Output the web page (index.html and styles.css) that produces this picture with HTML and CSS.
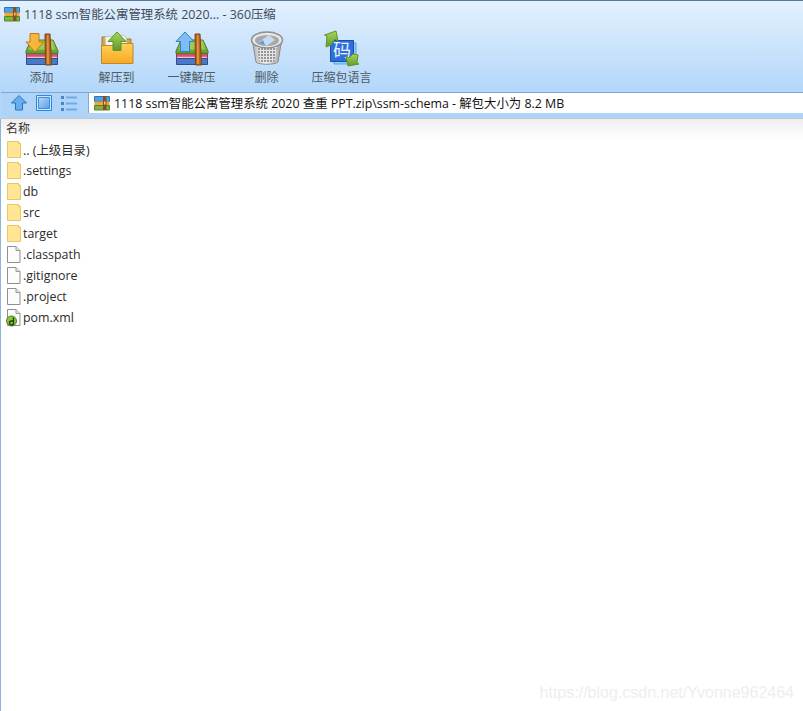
FILE: index.html
```html
<!DOCTYPE html>
<html>
<head>
    <title>360压缩</title>
    <link rel="stylesheet" href="styles.css">
</head>
<body>
    <svg class="defs" width="0" height="0">
        <defs>
            <linearGradient id="gold" x1="0" y1="0" x2="0" y2="1"><stop offset="0" stop-color="#fdd35a"/><stop offset="1" stop-color="#f9a821"/></linearGradient>
            <linearGradient id="green" x1="0" y1="0" x2="0" y2="1"><stop offset="0" stop-color="#a8d65a"/><stop offset="1" stop-color="#5c9a2c"/></linearGradient>
            <linearGradient id="can" x1="0" y1="0" x2="1" y2="0"><stop offset="0" stop-color="#b5b5b5"/><stop offset=".45" stop-color="#f6f6f6"/><stop offset="1" stop-color="#a5a5a5"/></linearGradient>
            <linearGradient id="pane" x1="0" y1="0" x2="1" y2="1"><stop offset="0" stop-color="#b4d8fb"/><stop offset="1" stop-color="#5c9fe8"/></linearGradient>
            <pattern id="holes" width="3" height="3" patternUnits="userSpaceOnUse"><rect width="3" height="3" fill="#e6e6e6"/><rect width="2" height="2" fill="#979797"/></pattern>
            <symbol id="books" viewBox="0 0 36 36">
                <path d="M2.500 23h31v5.500h-31z" fill="#d8506f" stroke="#8c3a50"/>
                <path d="M3 27.500h30" stroke="#f3c3cf" stroke-width="1.500"/>
                <path d="M2.500 28.500h31v6h-31z" fill="#4a78c8" stroke="#2f4f86"/>
                <path d="M7 10h22l5 11v2.500H2v-2.500z" fill="url(#green)" stroke="#4d7a2a"/>
                <path d="M8 11.500h20l3 8H5z" fill="#9ccb58"/>
                <path d="M21 4h5l1.500 31h-6z" fill="#b8651f" stroke="#7c4315"/>
                <path d="M23 5h1.500l.5 29h-2z" fill="#de9340"/>
            </symbol>
            <symbol id="archive-small" viewBox="0 0 16 16">
                <path d="M.5 1.500h15v5H.5z" fill="#4aa3e6" stroke="#2f78b4"/>
                <path d="M.5 6.500h15v4H.5z" fill="#f2a53a"/>
                <path d="M.5 10.500h15v4.500H.5z" fill="#7cb342" stroke="#55852a"/>
                <path d="M9 1h3.500v14H9z" fill="#8a4f1d"/>
                <path d="M10 6.500h1.500v3H10z" fill="#f2d36b"/>
            </symbol>
            <symbol id="folder" viewBox="0 0 14 17">
                <path d="M.5.500h11l2 2v14H.5z" fill="#ffe594" stroke="#e9c765"/>
                <path d="M11.500.500v2h2" fill="#fff3c4" stroke="#e9c765"/>
            </symbol>
            <symbol id="file" viewBox="0 0 14 17">
                <path d="M.5.500h8.500l4 4v12H.5z" fill="#fcfcfc" stroke="#8f8f8f"/>
                <path d="M9 .500v4h4" fill="#e4e4e4" stroke="#9a9a9a"/>
            </symbol>
        </defs>
    </svg>

    <div class="window">
        <div class="top">
            <div class="titlebar">
                <svg class="small-icon" width="16" height="16"><use href="#archive-small"/></svg>
                <span class="title">1118 ssm智能公寓管理系统 2020... - 360压缩</span>
            </div>
            <div class="toolbar">
                <div class="tool">
                    <svg class="tool-icon" width="36" height="36" viewBox="0 0 36 36">
                        <use href="#books" width="36" height="36"/>
                        <path d="M6 3.500h9v8.500h4.500l-8.500 10-9-10H6z" fill="#f6b73c" stroke="#c9761b"/>
                    </svg>
                    <span>添加</span>
                </div>
                <div class="tool">
                    <svg class="tool-icon" width="36" height="36" viewBox="0 0 36 36">
                        <path d="M3 7h12l2 2h15v22H3z" fill="#d9a63f" stroke="#a27a2a"/>
                        <path d="M6 7l18-2 3 2 2 14H7z" fill="#f5f5f5" stroke="#c4c4c4"/>
                        <path d="M2.500 15.500h14l2-2h15.500v20H2.500z" fill="url(#gold)" stroke="#b98a2c"/>
                        <path d="M18 2l9 9.500h-5v9h-8v-9H9z" fill="url(#green)" stroke="#5f9426"/>
                    </svg>
                    <span>解压到</span>
                </div>
                <div class="tool">
                    <svg class="tool-icon" width="36" height="36" viewBox="0 0 36 36">
                        <use href="#books" width="36" height="36"/>
                        <path d="M11 2l9 9.500h-4.500v10h-9v-10H2z" fill="#7fbdf5" stroke="#2f7fd0"/>
                    </svg>
                    <span>一键解压</span>
                </div>
                <div class="tool">
                    <svg class="tool-icon" width="36" height="36" viewBox="0 0 36 36">
                        <path d="M3.500 11l3.500 21c3 3 19 3 22 0l3.500-21z" fill="url(#can)" stroke="#8a8a8a"/>
                        <path d="M8 17l2.500 15h15L28 17z" fill="url(#holes)"/>
                        <ellipse cx="18" cy="10" rx="15.500" ry="8" fill="#e6e6e6" stroke="#8d8d8d" stroke-width="1.500"/>
                        <ellipse cx="18" cy="10.500" rx="12" ry="5.500" fill="#a8a8a8"/>
                        <path d="M10 12l10-7 6 5-8 5.500z" fill="#c3dcf3"/>
                        <path d="M10 13l4-3 2 5z" fill="#5a9edc"/>
                    </svg>
                    <span>删除</span>
                </div>
                <div class="tool">
                    <svg class="tool-icon" width="36" height="36" viewBox="0 0 36 36">
                        <path d="M10 13h22v21H10z" fill="#8fd0f5" stroke="#54a7de"/>
                        <path d="M6.500 10.500h23v21h-23z" fill="#2f6fdc" stroke="#1b4fa8"/>
                        <text class="code-char" x="18" y="27" text-anchor="middle">码</text>
                        <path d="M2 17l1-11-2.500-1L12 1l2 10-3-2-4 6z" fill="url(#green)" stroke="#5f9426"/>
                        <path d="M34 25l-1 8 2 1-11 2-2-10 3 2 4-4z" fill="url(#green)" stroke="#5f9426"/>
                    </svg>
                    <span>压缩包语言</span>
                </div>
            </div>
            <div class="navbar">
                <div class="nav-icons">
                    <svg width="16" height="16" viewBox="0 0 16 16"><path d="M8 .500l7.500 7.500H11.500v7h-7V8H.500z" fill="#66aef0" stroke="#2a72c4"/></svg>
                    <svg width="16" height="16" viewBox="0 0 16 16"><path d="M.500.500h15v15H.500z" fill="#cfe5fb" stroke="#2f86de"/><path d="M2.500 2.500h11v11h-11z" fill="url(#pane)" stroke="#3f8fe0"/></svg>
                    <svg width="16" height="16" viewBox="0 0 16 16"><path d="M0 1h3v3H0zM0 7h3v3H0zM0 13h3v3H0z" fill="#4a86c6"/><path d="M5 1.500h11v2H5zM5 7.500h11v2H5zM5 13.500h11v2H5z" fill="#6ea9e8"/></svg>
                </div>
                <div class="address">
                    <svg class="small-icon" width="16" height="16"><use href="#archive-small"/></svg>
                    <span>1118 ssm智能公寓管理系统 2020 查重 PPT.zip\ssm-schema - 解包大小为 8.2 MB</span>
                </div>
            </div>
        </div>

        <div class="list">
            <div class="list-head">名称</div>
            <div class="row"><svg width="14" height="17"><use href="#folder"/></svg><span>.. (上级目录)</span></div>
            <div class="row"><svg width="14" height="17"><use href="#folder"/></svg><span>.settings</span></div>
            <div class="row"><svg width="14" height="17"><use href="#folder"/></svg><span>db</span></div>
            <div class="row"><svg width="14" height="17"><use href="#folder"/></svg><span>src</span></div>
            <div class="row"><svg width="14" height="17"><use href="#folder"/></svg><span>target</span></div>
            <div class="row"><svg width="14" height="17"><use href="#file"/></svg><span>.classpath</span></div>
            <div class="row"><svg width="14" height="17"><use href="#file"/></svg><span>.gitignore</span></div>
            <div class="row"><svg width="14" height="17"><use href="#file"/></svg><span>.project</span></div>
            <div class="row">
                <svg width="14" height="17" viewBox="0 0 14 17">
                    <use href="#file" width="14" height="17"/>
                    <circle cx="4.500" cy="12" r="5" fill="#8cc63f" stroke="#4d7f1c"/>
                    <path d="M6.500 8.500v5.500a2 2 0 1 1-2-2h2" fill="none" stroke="#1f3d0c" stroke-width="1.300"/>
                </svg>
                <span>pom.xml</span>
            </div>
        </div>
    </div>

    <div class="watermark">https://blog.csdn.net/Yvonne962464</div>
</body>
</html>
```
FILE: styles.css
```css
* { margin: 0; padding: 0; box-sizing: border-box; }
html, body { height: 100%; }
body { font-family: "Open Sans", "Noto Sans CJK SC", sans-serif; font-size: 12.4px; color: #222; background: white; overflow: hidden; position: relative; }
svg { display: block; flex-shrink: 0; overflow: visible; }
.defs { position: absolute; }

.window { height: 100%; display: flex; flex-direction: column; border-left: 1px solid #8db4dc; }
.top { background: linear-gradient(#e3f0fe, #b3d7fa 90px); border-top: 1px solid #56789c; margin-left: -1px; padding-left: 1px; }

.titlebar { height: 26px; display: flex; align-items: center; gap: 4px; padding-left: 3px; }
.title { color: #3c4a58; }

.toolbar { height: 66px; display: flex; padding-left: 3px; border-bottom: 1px solid #7fa8d0; }
.tool { width: 75px; display: flex; flex-direction: column; align-items: center; font-size: 12px; color: #4d5963; }
.tool-icon { margin-top: 3px; }
.tool span { margin-top: 3px; line-height: 17px; white-space: nowrap; }
.code-char { font-family: "Noto Sans CJK SC", sans-serif; font-size: 18px; fill: #e8f2ff; }

.navbar { height: 26px; display: flex; background: #b0d4f8; border-bottom: 1px solid #c4c8cc; }
.nav-icons { width: 87px; display: flex; gap: 9px; padding: 2px 0 0 10px; }
.address { flex: 1; height: 20px; display: flex; align-items: center; gap: 4px; padding-left: 5px; background: white; color: #111; border-left: 1px solid #8ca9c6; white-space: nowrap; }

.list { flex: 1; background: white; }
.list-head { height: 20px; padding: 1px 0 0 5px; font-size: 12px; line-height: 17px; color: #333; background: linear-gradient(#eeeeee, #ffffff); }
.row { height: 21px; display: flex; align-items: center; gap: 2px; padding-left: 6px; color: #2b2b2b; }

.watermark { position: absolute; right: 9px; top: 684px; font-family: "Liberation Sans", sans-serif; font-size: 16px; line-height: 18px; color: #eeeeee; }
```
